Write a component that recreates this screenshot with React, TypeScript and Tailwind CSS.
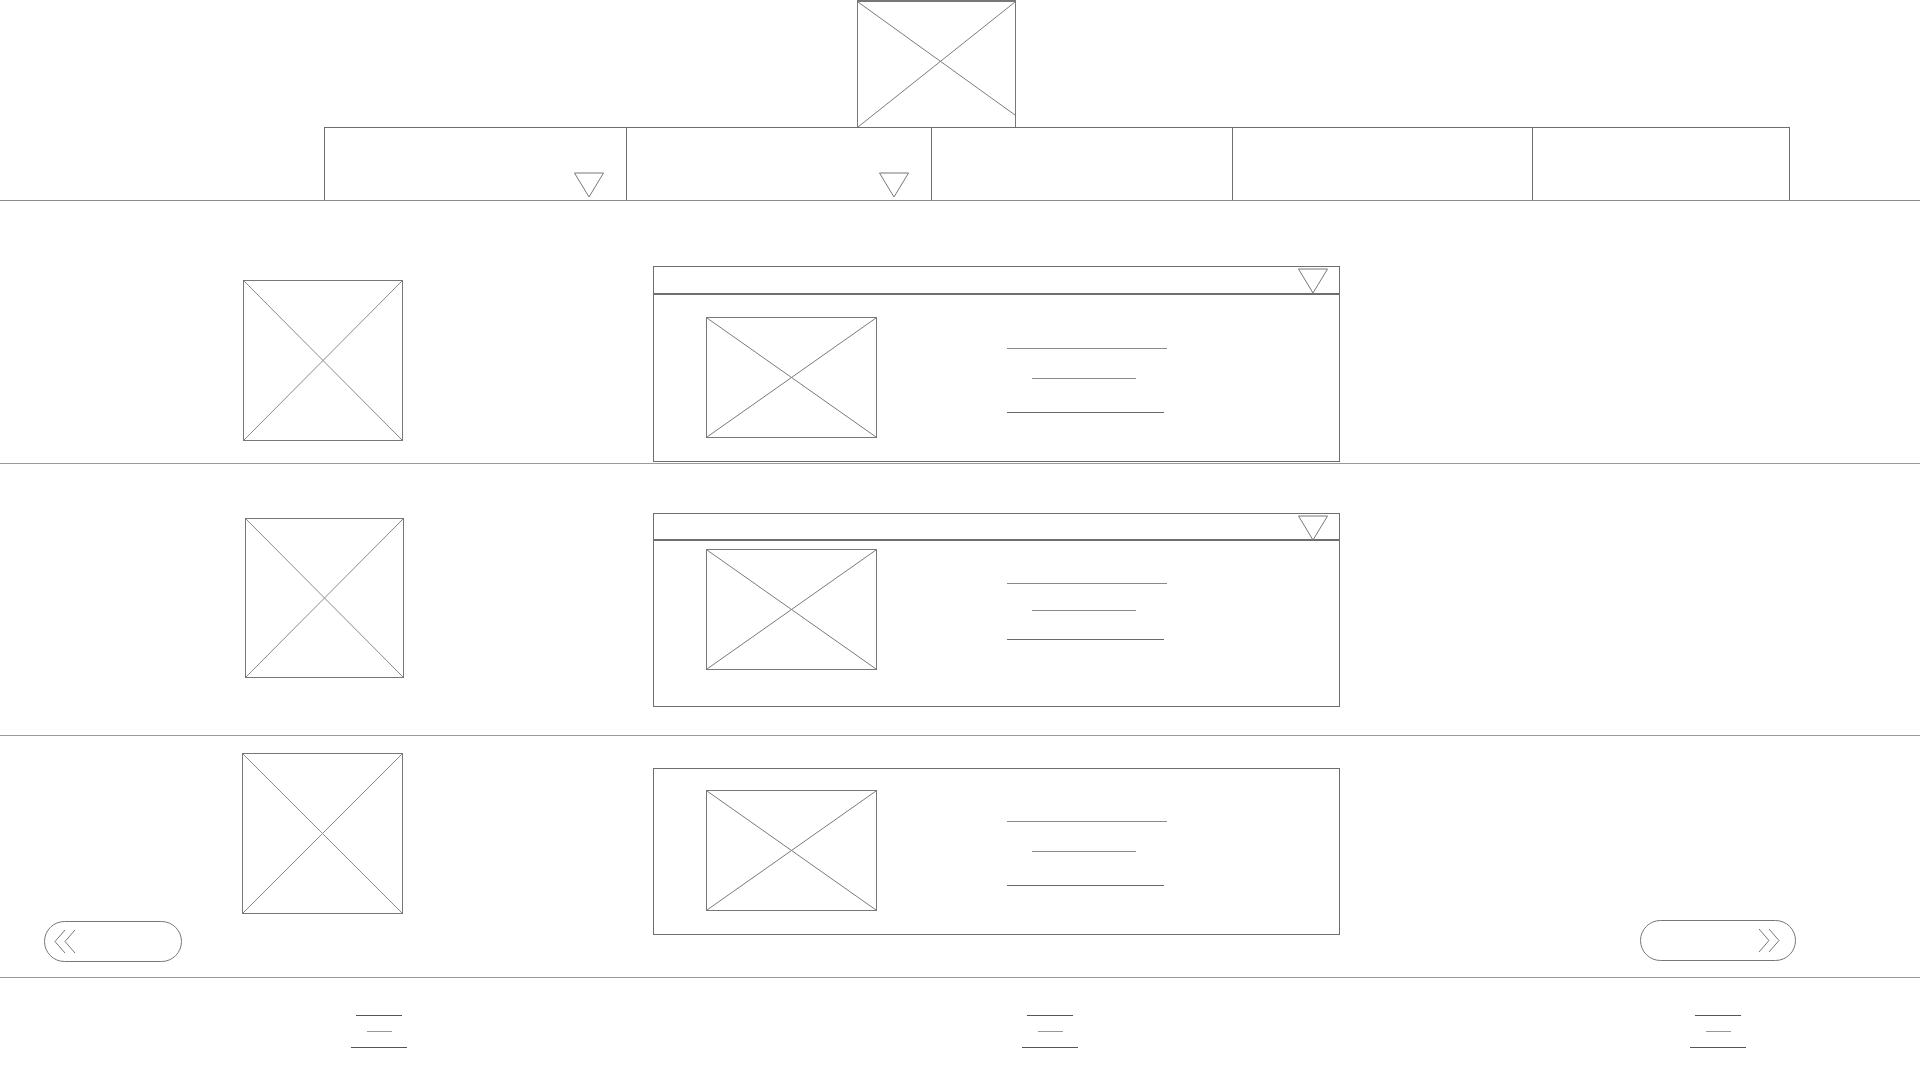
import React from "react";

// placeholder box with an X through it
function XBox({className, lineColor = "#8a8a8a"}: {className: string; lineColor?: string}) {
    return (
        <div className={`box-border border border-[#777] bg-white ${className}`}>
            <svg className="w-full h-full block" viewBox="0 0 100 100" preserveAspectRatio="none">
                <line x1="0" y1="0" x2="100" y2="100" stroke={lineColor} strokeWidth="1" vectorEffect="non-scaling-stroke"/>
                <line x1="0" y1="100" x2="100" y2="0" stroke={lineColor} strokeWidth="1" vectorEffect="non-scaling-stroke"/>
            </svg>
        </div>
    );
}

function Tri() {
    return (
        <svg width="30" height="26" viewBox="0 0 30 26" className="block">
            <polygon points="0.5,1 29.5,1 15,25" fill="none" stroke="#777" strokeWidth="1"/>
        </svg>
    );
}

function TextLines({gaps}: {gaps: string}) {
    return (
        <div className={`flex flex-col ${gaps}`}>
            <div className="w-[160px] h-px bg-[#8a8a8a]"></div>
            <div className="w-[104px] h-px bg-[#8a8a8a] ml-[25px]"></div>
            <div className="w-[157px] h-px bg-[#6a6a6a]"></div>
        </div>
    );
}

type CardProps = {
    header: boolean;
    cardClass: string;
    headClass?: string;
    bodyClass: string;
    gaps: string;
};

function Card({header, cardClass, headClass, bodyClass, gaps}: CardProps) {
    return (
        <div className={`box-border w-[687px] border border-[#6e6e6e] flex flex-col ${cardClass}`}>
            {header && (
                <div className={`box-border border-b-2 border-[#6e6e6e] flex justify-end items-start pr-[11px] pt-px ${headClass}`}>
                    <Tri/>
                </div>
            )}
            <div className={`flex items-start pl-[52px] ${bodyClass}`}>
                <XBox className="w-[171px] h-[121px]" lineColor="#7a7a7a"/>
                <div className="ml-[130px]">
                    <TextLines gaps={gaps}/>
                </div>
            </div>
        </div>
    );
}

function Chevrons({dir}: {dir: "left" | "right"}) {
    const d = dir === "left"
        ? ["M11 0 L1 11.5 L11 23", "M21 0 L11 11.5 L21 23"]
        : ["M5 0 L15 11.5 L5 23", "M15 0 L25 11.5 L15 23"];
    return (
        <svg width="26" height="24" viewBox="0 0 26 24" className="block">
            {d.map((p) => (
                <path key={p} d={p} fill="none" stroke="#777" strokeWidth="1"/>
            ))}
        </svg>
    );
}

function FooterIcon({className}: {className: string}) {
    return (
        <div className={`w-[56px] flex flex-col items-center gap-[15px] ${className}`}>
            <div className="w-[46px] h-px bg-[#555]"></div>
            <div className="w-[25px] h-px bg-[#999]"></div>
            <div className="w-[56px] h-px bg-[#555]"></div>
        </div>
    );
}

export default function App() {
    return (
        <div className="w-[1920px] h-[1080px] bg-white overflow-hidden">
            {/* Header: logo + nav */}
            <header className="box-border h-[201px] border-b border-[#8c8c8c]">
                <div className="box-border ml-[857px] w-[159px] h-[127px] border-t-2 border-l border-r border-[#777]">
                    <svg className="w-full h-full block" viewBox="0 0 159 125" preserveAspectRatio="none">
                        <line x1="0" y1="0" x2="159" y2="113" stroke="#7a7a7a" strokeWidth="1"/>
                        <line x1="0" y1="125" x2="159" y2="0" stroke="#7a7a7a" strokeWidth="1"/>
                    </svg>
                </div>
                <nav className="box-border ml-[324px] w-[1466px] h-[73px] border-t border-l border-r border-[#6e6e6e] flex">
                    <div className="w-[302px] border-r border-[#6e6e6e] flex justify-end items-end pr-[22px] pb-[2px]">
                        <Tri/>
                    </div>
                    <div className="w-[305px] border-r border-[#6e6e6e] flex justify-end items-end pr-[22px] pb-[2px]">
                        <Tri/>
                    </div>
                    <div className="w-[301px] border-r border-[#6e6e6e]"></div>
                    <div className="w-[300px] border-r border-[#6e6e6e]"></div>
                    <div className="flex-1"></div>
                </nav>
            </header>

            {/* Row 1 */}
            <section className="box-border h-[263px] border-b border-[#9a9a9a] flex items-start">
                <XBox className="ml-[243px] mt-[79px] w-[160px] h-[161px]"/>
                <div className="ml-[250px] mt-[65px]">
                    <Card header cardClass="h-[196px]" headClass="h-[28px]" bodyClass="pt-[22px]" gaps="pt-[31px] gap-[29px] [&>*:nth-child(3)]:mt-[4px]"/>
                </div>
            </section>

            {/* Row 2 */}
            <section className="box-border h-[272px] border-b border-[#9a9a9a] flex items-start">
                <XBox className="ml-[245px] mt-[54px] w-[159px] h-[160px]"/>
                <div className="ml-[249px] mt-[49px]">
                    <Card header cardClass="h-[194px]" headClass="h-[27px]" bodyClass="pt-[8px]" gaps="pt-[34px] gap-[26px] [&>*:nth-child(3)]:mt-[2px]"/>
                </div>
            </section>

            {/* Row 3 with carousel arrows */}
            <section className="box-border h-[242px] border-b border-[#9a9a9a] flex items-start pl-[44px]">
                <button className="box-border self-end mb-[15px] w-[138px] h-[41px] rounded-full border border-[#777] flex items-center pl-[9px]">
                    <Chevrons dir="left"/>
                </button>
                <XBox className="ml-[60px] mt-[17px] w-[161px] h-[161px]"/>
                <div className="ml-[250px] mt-[32px]">
                    <Card header={false} cardClass="h-[167px]" bodyClass="pt-[21px]" gaps="pt-[31px] gap-[29px] [&>*:nth-child(3)]:mt-[4px]"/>
                </div>
                <button className="box-border self-end mb-[16px] ml-[300px] w-[156px] h-[41px] rounded-full border border-[#777] flex items-center justify-end pr-[15px]">
                    <Chevrons dir="right"/>
                </button>
            </section>

            {/* Footer */}
            <footer className="flex items-start pt-[37px]">
                <FooterIcon className="ml-[351px]"/>
                <FooterIcon className="ml-[615px]"/>
                <FooterIcon className="ml-[612px]"/>
            </footer>
        </div>
    );
}
